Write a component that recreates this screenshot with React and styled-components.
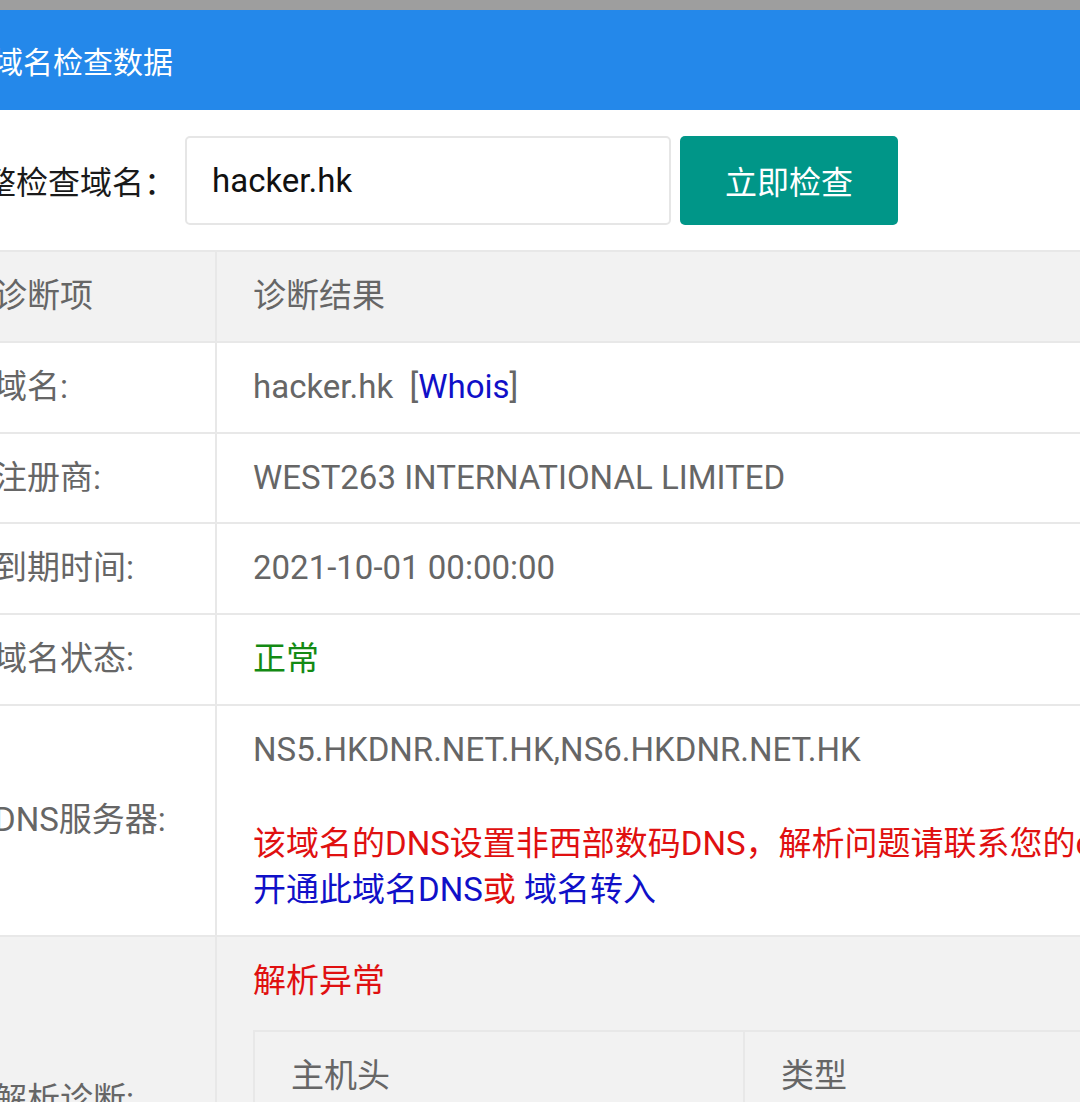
import React from 'react'
import styled, { createGlobalStyle } from 'styled-components'

const GlobalStyle = createGlobalStyle`
  html, body {
    margin: 0;
    padding: 0;
    overflow: hidden;
    background: #ffffff;
  }
  body {
    font-family: Roboto, "Noto Sans CJK SC", sans-serif;
  }
`

const Page = styled.div`
  margin-left: -50px;
  width: 1500px;
`

const StatusStrip = styled.div`
  height: 10px;
  background: #9e9e9e;
`

const Header = styled.div`
  display: flex;
  align-items: center;
  height: 100px;
  padding-left: 43px;
  background: #2488ea;
  color: #ffffff;
  font-size: 30px;
`

const FormRow = styled.div`
  display: flex;
  align-items: center;
  height: 140px;
  padding-left: 2px;
`

const FormLabel = styled.label`
  font-size: 32px;
  color: #1a1a1a;
  margin-right: 9px;
`

const DomainInput = styled.input`
  box-sizing: border-box;
  width: 486px;
  height: 89px;
  padding: 0 25px;
  border: 2px solid #e6e6e6;
  border-radius: 5px;
  font-family: inherit;
  font-size: 33px;
  color: #111111;
  outline: none;
`

const CheckButton = styled.button`
  box-sizing: border-box;
  width: 218px;
  height: 89px;
  margin-left: 9px;
  border: none;
  border-radius: 5px;
  background: #009688;
  color: #ffffff;
  font-family: inherit;
  font-size: 32px;
`

const Table = styled.table`
  margin-left: 6px;
  width: 1480px;
  table-layout: fixed;
  border-collapse: collapse;
  font-size: 33px;
  color: #666666;
`

const Row = styled.tr`
  background: ${props => (props.$shade ? '#f2f2f2' : '#ffffff')};
`

const Cell = styled.td`
  box-sizing: border-box;
  border: 2px solid #e8e8e8;
  padding: 21px 36px;
  line-height: 46.8px;
  vertical-align: middle;
  white-space: nowrap;
  overflow: hidden;
  width: ${props => props.$width || 'auto'};
`

const Red = styled.span`
  color: #e01010;
`

const Blue = styled.a`
  color: #1010c8;
  text-decoration: none;
`

const Green = styled.span`
  color: #138a13;
`

const InnerTitle = styled.div`
  color: #e01010;
  margin-bottom: 25px;
`

const InnerTable = styled.table`
  width: 1140px;
  table-layout: fixed;
  border-collapse: collapse;
  font-size: 33px;
  color: #666666;
  margin-bottom: 30px;
`

const InnerCell = styled.td`
  box-sizing: border-box;
  border: 2px solid #e8e8e8;
  padding: 21px 36px;
  line-height: 46.8px;
  width: ${props => props.$width || 'auto'};
`

export default function App() {
  const rows = [
    { label: '域名:', value: <>hacker.hk&nbsp;&nbsp;[<Blue href="#">Whois</Blue>]</> },
    { label: '注册商:', value: 'WEST263 INTERNATIONAL LIMITED' },
    { label: '到期时间:', value: '2021-10-01 00:00:00' },
    { label: '域名状态:', value: <Green>正常</Green> }
  ]

  return (
    <Page>
      <GlobalStyle />
      <StatusStrip />
      <Header>域名检查数据</Header>
      <FormRow>
        <FormLabel>完整检查域名：</FormLabel>
        <DomainInput defaultValue="hacker.hk" />
        <CheckButton>立即检查</CheckButton>
      </FormRow>
      <Table>
        <tbody>
          <Row $shade>
            <Cell $width="259px">诊断项</Cell>
            <Cell>诊断结果</Cell>
          </Row>
          {rows.map(item => (
            <Row key={item.label}>
              <Cell>{item.label}</Cell>
              <Cell>{item.value}</Cell>
            </Row>
          ))}
          <Row>
            <Cell>DNS服务器:</Cell>
            <Cell>
              NS5.HKDNR.NET.HK,NS6.HKDNR.NET.HK
              <br />
              <br />
              <Red>该域名的DNS设置非西部数码DNS，解析问题请联系您的dns服务商，或</Red>
              <br />
              <Blue href="#">开通此域名DNS</Blue>
              <Red>或</Red> <Blue href="#">域名转入</Blue>
            </Cell>
          </Row>
          <Row $shade>
            <Cell>解析诊断:</Cell>
            <Cell>
              <InnerTitle>解析异常</InnerTitle>
              <InnerTable>
                <tbody>
                  <tr>
                    <InnerCell $width="490px">主机头</InnerCell>
                    <InnerCell>类型</InnerCell>
                  </tr>
                  <tr>
                    <InnerCell>@</InnerCell>
                    <InnerCell>A</InnerCell>
                  </tr>
                </tbody>
              </InnerTable>
            </Cell>
          </Row>
        </tbody>
      </Table>
    </Page>
  )
}
